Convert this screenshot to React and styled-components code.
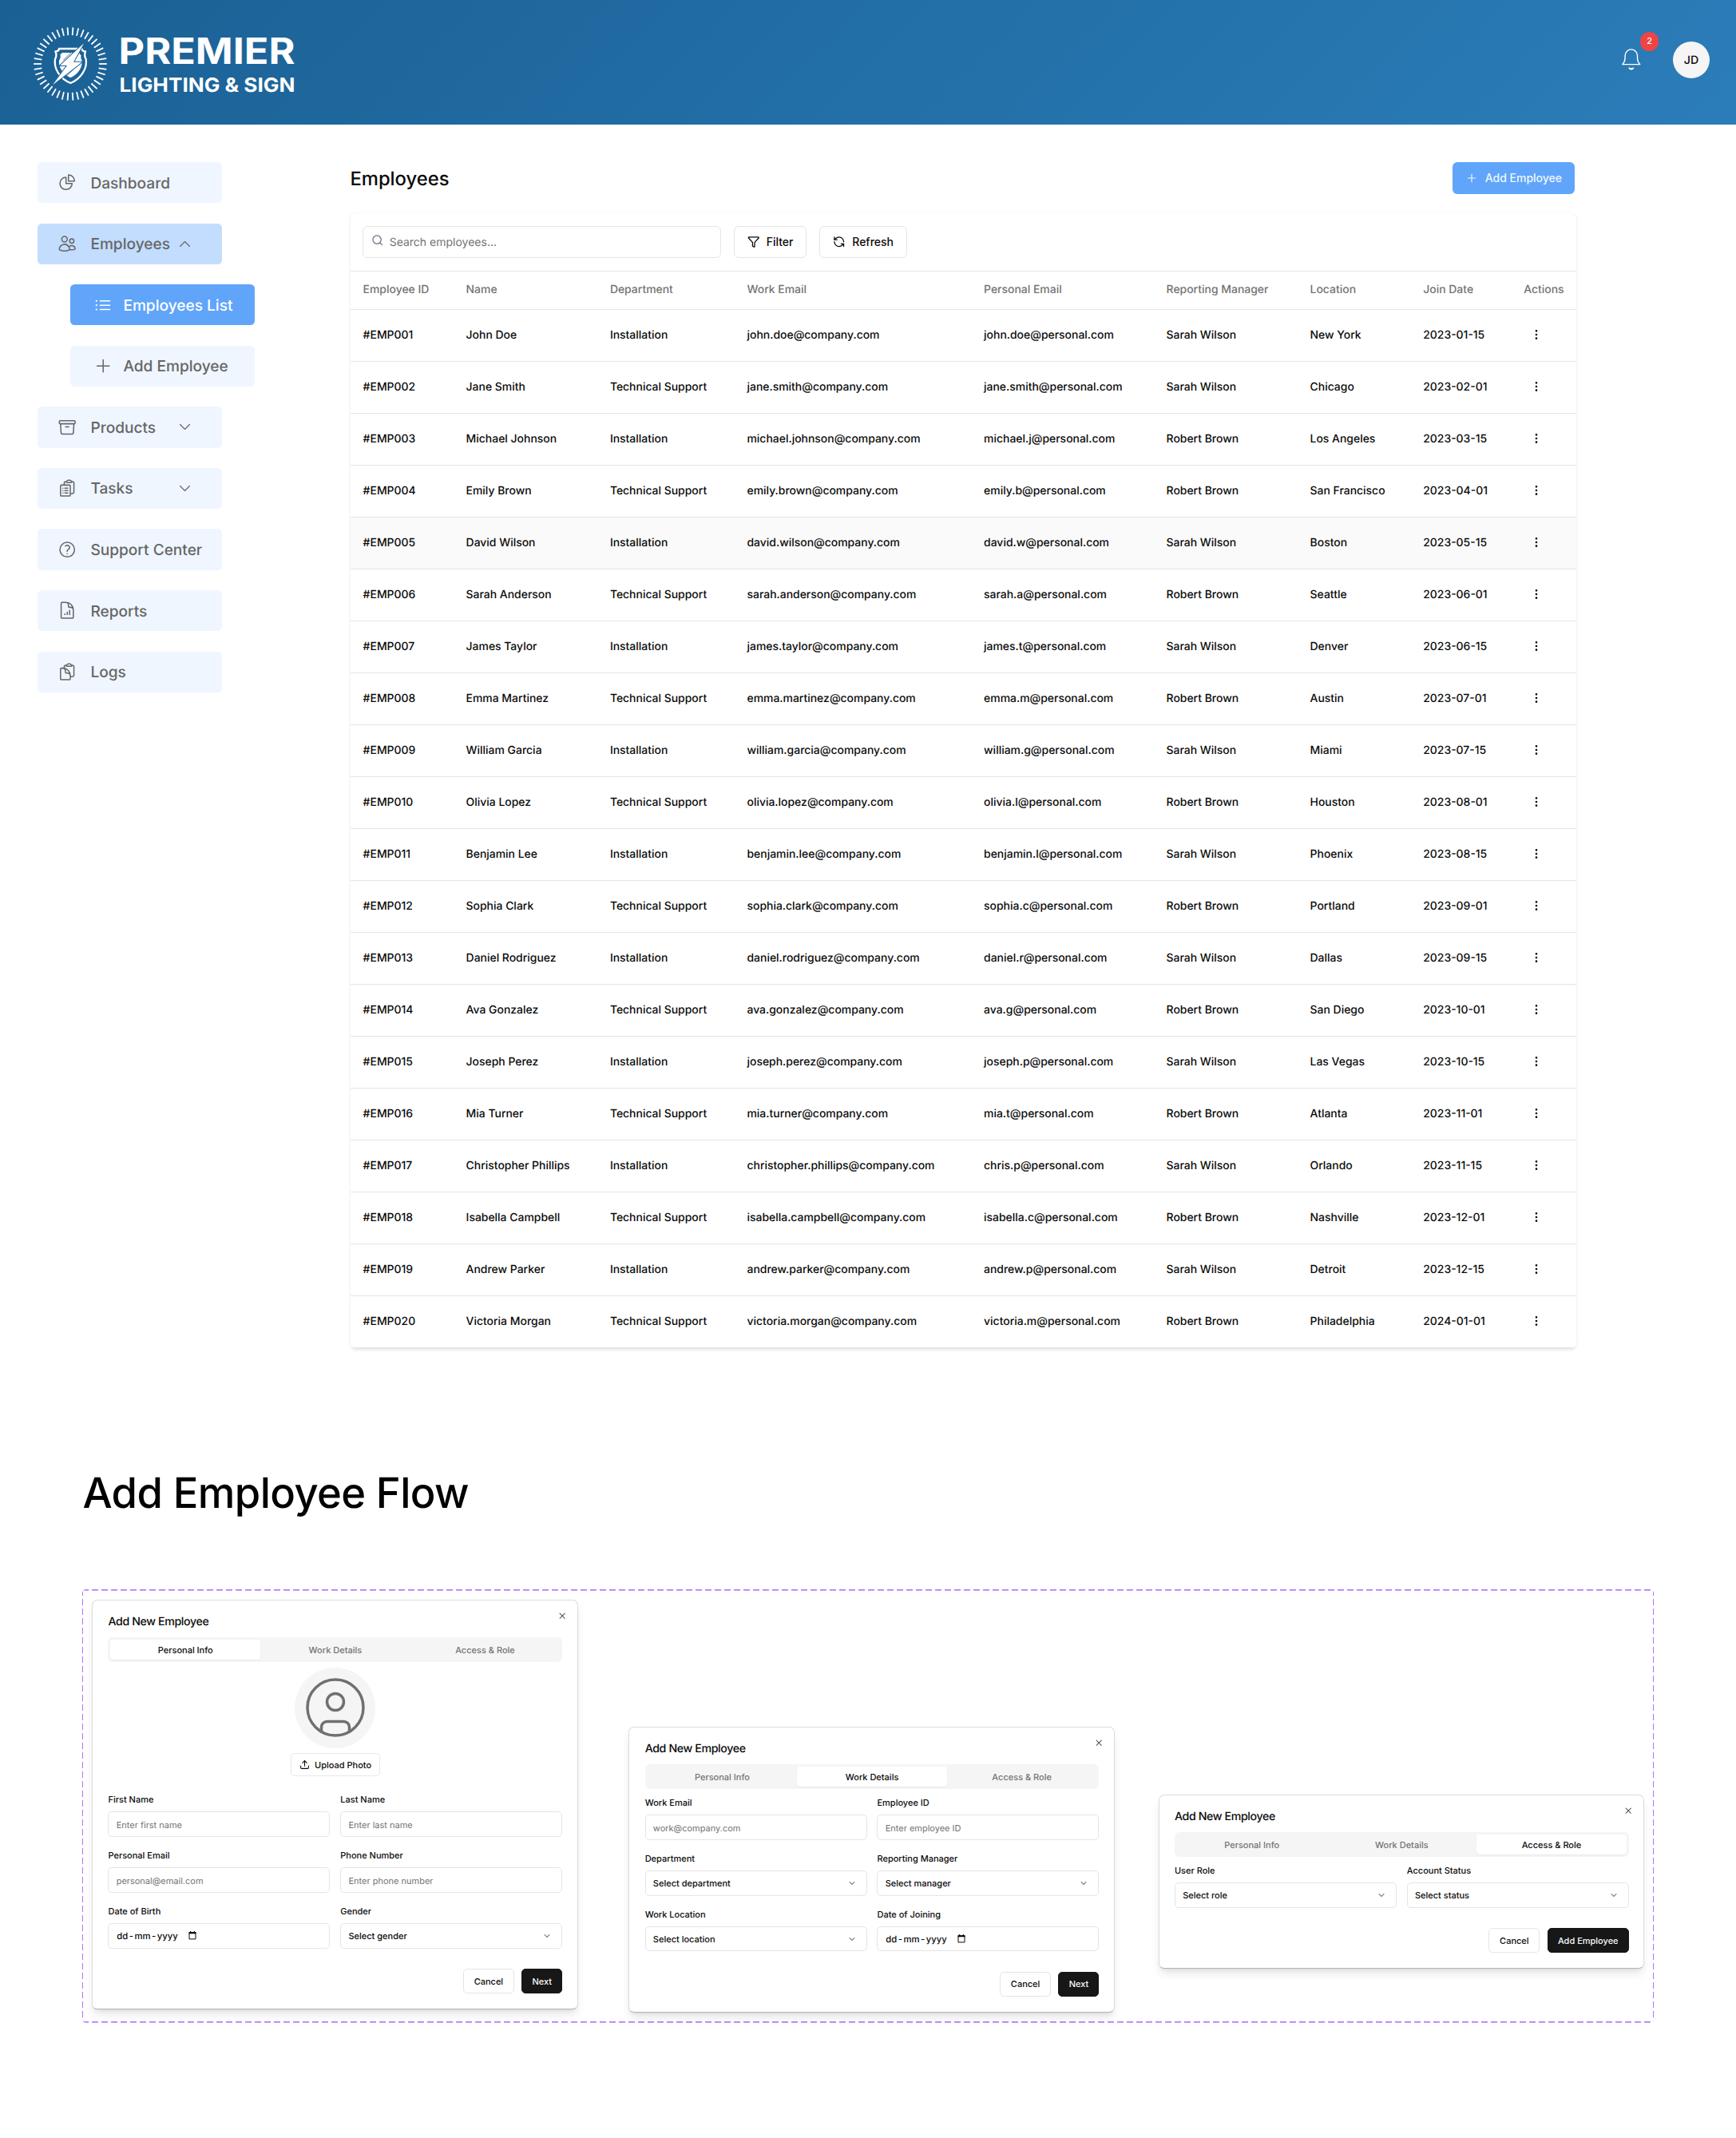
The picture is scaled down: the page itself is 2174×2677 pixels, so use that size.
import React from "react";
import styled, { createGlobalStyle, css } from "styled-components";
import {
  HiOutlineChartPie,
  HiOutlineUsers,
  HiOutlineListBullet,
  HiOutlinePlus,
  HiOutlineArchiveBox,
  HiOutlineClipboardDocumentList,
  HiOutlineQuestionMarkCircle,
  HiOutlineDocumentChartBar,
  HiOutlineClipboardDocument,
  HiOutlineChevronUp,
  HiOutlineChevronDown,
} from "react-icons/hi2";
import { Search, Filter, RefreshCcw, Plus, EllipsisVertical, X, CircleUser, Upload, ChevronDown } from "lucide-react";

const GlobalStyle = createGlobalStyle`
  *, *::before, *::after { box-sizing: border-box; }
  body {
    margin: 0;
    background: #fff;
    color: #0a0a0a;
    font-family: Inter, "Liberation Sans", sans-serif;
    font-weight: 500;
    text-rendering: geometricPrecision;
  }
  button { font: inherit; color: inherit; margin: 0; }
  svg { flex: none; display: block; }
`;

const Page = styled.div`
  width: 2174px;
  height: 2677px;
  overflow: hidden;
`;

/* ---------- header ---------- */

const Header = styled.header`
  height: 156px;
  padding: 0 33px 0 0;
  display: flex;
  align-items: center;
  justify-content: space-between;
  background: linear-gradient(135deg, #1a6094 0%, #2b7db9 100%);
`;

const HeaderTools = styled.div`
  display: flex;
  align-items: center;
  gap: 40.5px;
  margin-top: -6px;
`;

const BellButton = styled.div`
  position: relative;
  width: 24px;
  height: 28px;
`;

const Badge = styled.span`
  position: absolute;
  left: 23.6px;
  top: -20.6px;
  width: 23.2px;
  height: 23.2px;
  border-radius: 50%;
  background: #ef4444;
  color: #fafafa;
  font-size: 11px;
  line-height: 23px;
  text-align: center;
`;

const UserAvatar = styled.div`
  width: 46px;
  height: 46px;
  border-radius: 50%;
  background: #f5f5f5;
  color: #0a0a0a;
  display: grid;
  place-items: center;
  font-size: 14.2px;
`;

const TICKS = Array.from({ length: 42 }, (_, i) => (i * 360) / 42);

function Logo() {
  return (
    <svg width="390" height="156" viewBox="0 0 390 156" fill="#fff">
      <g stroke="#fff" strokeWidth="1.8">
        {TICKS.map((a) => (
          <line key={a} x1="124" y1="80" x2="133.8" y2="80" transform={`rotate(${a} 88 80)`} />
        ))}
      </g>
      <g transform="scale(0.33333)">
        <path
          d="M222 183 H307 C308 190 313 193 321 193 C316 206 318 214 323 222 C329 257 304 296 265 312 C225 296 201 257 207 222 C212 214 214 206 208 193 C216 193 221 190 222 183 Z"
          fill="none"
          stroke="#fff"
          strokeWidth="7"
          strokeLinejoin="round"
        />
        <path d="M233 198 H298 C299 203 302 206 305 208 C303 216 304 221 308 227 C311 252 294 278 265 292 C236 278 219 252 222 227 C227 220 229 212 226 204 C230 203 232 201 233 198 Z" />
        <path d="M238 226 L268 196 M250 226 L280 196 M250 286 L296 240 M240 282 L284 240" stroke="#1c6498" strokeWidth="2.5" />
        <path d="M315 163 L226 246 H252 L198 319 L308 233 H276 Z" stroke="#1c6498" strokeWidth="6" strokeLinejoin="miter" />
        <path d="M315 163 L226 246 H252 L198 319 L308 233 H276 Z" />
      </g>
      <text x="148.5" y="79.6" fontSize="45.5" fontWeight="700" textLength="221" lengthAdjust="spacingAndGlyphs">
        PREMIER
      </text>
      <text x="149.5" y="115" fontSize="24.4" fontWeight="700" textLength="220" lengthAdjust="spacingAndGlyphs">
        LIGHTING &amp; SIGN
      </text>
    </svg>
  );
}

function Bell() {
  return (
    <svg width="24" height="28" viewBox="0 0 24 28" fill="none" stroke="#fff" strokeWidth="1.4" strokeLinecap="round" strokeLinejoin="round">
      <path d="M.8 19.6H22.8C20.6 17.6 19.5 14.8 19.5 11V8.6A7.7 7.7 0 0 0 4.1 8.6V11C4.1 14.8 3 17.6 .8 19.6Z" />
      <path d="M9.1 24.1C10 26.4 13.7 26.4 14.6 24.1C13 25 10.7 25 9.1 24.1Z" fill="#fff" />
    </svg>
  );
}

/* ---------- body ---------- */

const Body = styled.div`
  display: flex;
  padding: 47px 0 0 47px;
`;

const Sidebar = styled.nav`
  width: 391.4px;
  flex: none;
  display: flex;
  flex-direction: column;
  gap: 25.4px;
`;

const NavItem = styled.a`
  width: 230.6px;
  height: 51.2px;
  margin-left: ${(p) => (p.$sub ? "41px" : "0")};
  padding-left: ${(p) => (p.$sub ? "28.6px" : "24.6px")};
  border-radius: 5.5px;
  display: flex;
  align-items: center;
  font-size: 19.1px;
  color: #666;
  background: #eff6ff;
  ${(p) => p.$tone === "open" && css`background: #c3ddfe;`}
  ${(p) => p.$tone === "active" && css`background: #60a5fa; color: #fff;`}
`;

const NavLabel = styled.span`
  margin-left: ${(p) => (p.$sub ? "13.4px" : "17.4px")};
  flex: 1;
  white-space: nowrap;
`;

const NavChevron = styled.span`
  width: 19px;
  margin-right: 36.6px;
`;

const NAV = [
  { label: "Dashboard", Icon: HiOutlineChartPie },
  { label: "Employees", Icon: HiOutlineUsers, tone: "open", Chevron: HiOutlineChevronUp },
  { label: "Employees List", Icon: HiOutlineListBullet, tone: "active", sub: true },
  { label: "Add Employee", Icon: HiOutlinePlus, sub: true },
  { label: "Products", Icon: HiOutlineArchiveBox, Chevron: HiOutlineChevronDown },
  { label: "Tasks", Icon: HiOutlineClipboardDocumentList, Chevron: HiOutlineChevronDown },
  { label: "Support Center", Icon: HiOutlineQuestionMarkCircle },
  { label: "Reports", Icon: HiOutlineDocumentChartBar },
  { label: "Logs", Icon: HiOutlineClipboardDocument },
];

const Main = styled.main`
  width: 1536.6px;
`;

const TitleBar = styled.div`
  height: 40px;
  width: 1533.4px;
  display: flex;
  align-items: center;
  justify-content: space-between;
`;

const PageTitle = styled.h1`
  margin: 0;
  font-size: 23.8px;
  font-weight: 500;
`;

const PrimaryButton = styled.button`
  height: 40px;
  width: 152.8px;
  padding: 0 0 1px;
  border: 0;
  border-radius: 6px;
  background: #60a5fa;
  color: #eff6ff;
  display: flex;
  align-items: center;
  justify-content: center;
  gap: 9px;
  font-size: 14px;
`;

const Card = styled.section`
  margin-top: 23px;
  height: 1423px;
  border: 1px solid #f7f7f7;
  border-top-color: #fcfcfc;
  border-bottom-color: #e5e5e5;
  border-radius: 8px;
  overflow: hidden;
  box-shadow: 0 1.5px 3px rgba(0, 0, 0, 0.07);
`;

const Toolbar = styled.div`
  height: 73px;
  padding: 0 15px 1px;
  display: flex;
  align-items: center;
  gap: 16px;
  border-bottom: 1px solid #e5e5e5;
`;

const SearchBox = styled.div`
  width: 448.4px;
  height: 40px;
  padding: 0 10px;
  border: 1px solid #e5e5e5;
  border-radius: 6px;
  display: flex;
  align-items: center;
  gap: 6.8px;
  color: #737373;
  font-size: 14px;
  font-weight: 400;
  svg { color: #6b7280; margin-top: -3px; }
  span { padding-top: 1px; }
`;

const OutlineButton = styled.button`
  height: 40px;
  width: ${(p) => p.$width}px;
  padding: 0;
  border: 1px solid #e5e5e5;
  border-radius: 6px;
  background: #fff;
  display: flex;
  align-items: center;
  justify-content: center;
  gap: 8.5px;
  font-size: 14px;
`;

const Row = styled.div`
  height: 65px;
  padding-bottom: 1.6px;
  display: grid;
  grid-template-columns: 129px 180.3px 171.6px 296.6px 228.5px 180px 141.7px 126px 1fr;
  align-items: center;
  border-bottom: 1px solid #e5e5e5;
  font-size: 13.95px;
  background: ${(p) => (p.$hover ? "#fafafa" : "transparent")};
`;

const HeadRow = styled(Row)`
  height: 48px;
  color: #737373;
`;

const Cell = styled.div`
  padding-left: 15.2px;
  white-space: nowrap;
`;

const ActionCell = styled(Cell)`
  padding-left: 22.6px;
`;

const HEADINGS = ["Employee ID", "Name", "Department", "Work Email", "Personal Email", "Reporting Manager", "Location", "Join Date", "Actions"];

const SW = "Sarah Wilson";
const RB = "Robert Brown";

const PEOPLE = [
  ["John Doe", "john.doe", "john.doe", SW, "New York", "2023-01-15"],
  ["Jane Smith", "jane.smith", "jane.smith", SW, "Chicago", "2023-02-01"],
  ["Michael Johnson", "michael.johnson", "michael.j", RB, "Los Angeles", "2023-03-15"],
  ["Emily Brown", "emily.brown", "emily.b", RB, "San Francisco", "2023-04-01"],
  ["David Wilson", "david.wilson", "david.w", SW, "Boston", "2023-05-15"],
  ["Sarah Anderson", "sarah.anderson", "sarah.a", RB, "Seattle", "2023-06-01"],
  ["James Taylor", "james.taylor", "james.t", SW, "Denver", "2023-06-15"],
  ["Emma Martinez", "emma.martinez", "emma.m", RB, "Austin", "2023-07-01"],
  ["William Garcia", "william.garcia", "william.g", SW, "Miami", "2023-07-15"],
  ["Olivia Lopez", "olivia.lopez", "olivia.l", RB, "Houston", "2023-08-01"],
  ["Benjamin Lee", "benjamin.lee", "benjamin.l", SW, "Phoenix", "2023-08-15"],
  ["Sophia Clark", "sophia.clark", "sophia.c", RB, "Portland", "2023-09-01"],
  ["Daniel Rodriguez", "daniel.rodriguez", "daniel.r", SW, "Dallas", "2023-09-15"],
  ["Ava Gonzalez", "ava.gonzalez", "ava.g", RB, "San Diego", "2023-10-01"],
  ["Joseph Perez", "joseph.perez", "joseph.p", SW, "Las Vegas", "2023-10-15"],
  ["Mia Turner", "mia.turner", "mia.t", RB, "Atlanta", "2023-11-01"],
  ["Christopher Phillips", "christopher.phillips", "chris.p", SW, "Orlando", "2023-11-15"],
  ["Isabella Campbell", "isabella.campbell", "isabella.c", RB, "Nashville", "2023-12-01"],
  ["Andrew Parker", "andrew.parker", "andrew.p", SW, "Detroit", "2023-12-15"],
  ["Victoria Morgan", "victoria.morgan", "victoria.m", RB, "Philadelphia", "2024-01-01"],
];

function EmployeeTable() {
  return (
    <>
      <HeadRow>
        {HEADINGS.map((h) => (
          <Cell key={h}>{h}</Cell>
        ))}
      </HeadRow>
      {PEOPLE.map(([name, work, personal, manager, city, date], i) => (
        <Row key={name} $hover={i === 4}>
          <Cell>#EMP{String(i + 1).padStart(3, "0")}</Cell>
          <Cell>{name}</Cell>
          <Cell>{i % 2 ? "Technical Support" : "Installation"}</Cell>
          <Cell>{work}@company.com</Cell>
          <Cell>{personal}@personal.com</Cell>
          <Cell>{manager}</Cell>
          <Cell>{city}</Cell>
          <Cell>{date}</Cell>
          <ActionCell>
            <EllipsisVertical size={16} />
          </ActionCell>
        </Row>
      ))}
    </>
  );
}

/* ---------- add employee flow ---------- */

const Flow = styled.section`
  padding: 148px 0 0 103.4px;
`;

const FlowTitle = styled.h2`
  margin: 0;
  font-size: 52.5px;
  line-height: 64px;
  font-weight: 500;
  letter-spacing: -0.6px;
  color: #000;
`;

const dashX = "repeating-linear-gradient(90deg, #ad72ff 0 8px, transparent 8px 12px)";
const dashY = "repeating-linear-gradient(180deg, #ad72ff 0 8px, transparent 8px 12px)";

const FlowFrame = styled.div`
  margin-top: 89px;
  width: 1968px;
  height: 542.6px;
  padding: 12.9px 0 0 11.9px;
  display: flex;
  align-items: flex-start;
  border-radius: 5px;
  background-image: ${dashX}, ${dashX}, ${dashY}, ${dashY};
  background-size: 100% 1.6px, 100% 1.6px, 1.4px 100%, 1.4px 100%;
  background-position: 0 0, 0 100%, 0 0, 100% 0;
  background-repeat: no-repeat;
`;

const Dialog = styled.div`
  width: 608.4px;
  height: ${(p) => p.$height}px;
  margin: ${(p) => p.$top || 0}px 0 0 ${(p) => p.$left || 0}px;
  padding: 19.2px 18.4px 0 19.2px;
  border: 1px solid #dcdcdc;
  border-bottom-color: #b4b4b4;
  border-radius: 7px;
  background: #fff;
  box-shadow: 0 8px 12px -2px rgba(0, 0, 0, 0.1), 0 3px 5px -3px rgba(0, 0, 0, 0.1);
`;

const DialogHead = styled.div`
  height: 27px;
  display: flex;
  justify-content: space-between;
  align-items: flex-start;
  svg { color: #555; margin: -6.4px -6px 0 0; }
`;

const DialogTitle = styled.h3`
  margin: 0;
  font-size: 14.2px;
  line-height: 15px;
  font-weight: 550;
  letter-spacing: -0.38px;
`;

const Tabs = styled.div`
  height: 31.4px;
  padding: 3px;
  display: grid;
  grid-template-columns: repeat(3, 1fr);
  border-radius: 6px;
  background: #f5f5f5;
`;

const Tab = styled.div`
  display: grid;
  place-items: center;
  border-radius: 4px;
  font-size: 11px;
  color: ${(p) => (p.$active ? "#0a0a0a" : "#737373")};
  ${(p) => p.$active && css`background: #fff; box-shadow: 0 1px 2px rgba(0, 0, 0, 0.06);`}
`;

const PhotoArea = styled.div`
  padding-top: 6.3px;
  height: 155.8px;
  display: flex;
  flex-direction: column;
  align-items: center;
  gap: 6.4px;
`;

const PhotoCircle = styled.div`
  width: 101.2px;
  height: 101.2px;
  border-radius: 50%;
  background: #f5f5f5;
  color: #707070;
  display: grid;
  place-items: center;
`;

const UploadButton = styled.button`
  width: 111.4px;
  height: 28.4px;
  padding: 0;
  border: 1px solid #e8e8e8;
  border-radius: 5px;
  background: #fff;
  display: flex;
  align-items: center;
  justify-content: center;
  gap: 6.5px;
  font-size: 11px;
`;

const FormGrid = styled.div`
  margin-top: ${(p) => p.$top}px;
  display: grid;
  grid-template-columns: 1fr 1fr;
  gap: 17.3px 12.8px;
`;

const FieldLabel = styled.div`
  height: 12px;
  margin-bottom: 9.2px;
  font-size: 11px;
  line-height: 12px;
`;

const Control = styled.div`
  height: 31.4px;
  padding: 0 12px 0 9.2px;
  border: 1px solid #e5e5e5;
  border-radius: 5px;
  display: flex;
  align-items: center;
  font-size: 11px;
  font-weight: ${(p) => (p.$placeholder ? 400 : 500)};
  color: ${(p) => (p.$placeholder ? "#737373" : "#0a0a0a")};
  padding-top: ${(p) => (p.$placeholder ? "2px" : "0")};
`;

const Grow = styled.span`
  flex: 1;
`;

const DateParts = styled.span`
  display: flex;
  gap: 1.5px;
  width: 90px;
  padding-left: 0.6px;
  font-size: 11.3px;
  font-weight: 450;
`;

const DialogActions = styled.div`
  margin-top: 25.4px;
  display: flex;
  justify-content: flex-end;
  gap: 9.4px;
`;

const DialogButton = styled.button`
  width: ${(p) => p.$width}px;
  height: 31.4px;
  padding: 0;
  border-radius: 5px;
  font-size: 11px;
  border: 1px solid ${(p) => (p.$dark ? "#171717" : "#e5e5e5")};
  background: ${(p) => (p.$dark ? "#171717" : "#fff")};
  color: ${(p) => (p.$dark ? "#fafafa" : "#0a0a0a")};
`;

function CalendarIcon() {
  return (
    <svg width="10" height="11" viewBox="0 0 10 11">
      <path d="M1 1.7h8v8.2H1z" fill="none" stroke="#0a0a0a" strokeWidth="1" />
      <path d="M.5 1.2h9v2.1h-9zM2 0h1.2v2H2zM6.8 0H8v2H6.8z" fill="#0a0a0a" />
    </svg>
  );
}

function Field({ label, kind, text }) {
  return (
    <div>
      <FieldLabel>{label}</FieldLabel>
      {kind === "date" && (
        <Control>
          <DateParts>
            <span>dd</span>
            <span>-</span>
            <span>mm</span>
            <span>-</span>
            <span>yyyy</span>
          </DateParts>
          <CalendarIcon />
        </Control>
      )}
      {kind === "select" && (
        <Control>
          <Grow>{text}</Grow>
          <ChevronDown size={12} color="#888" strokeWidth={2.2} />
        </Control>
      )}
      {!kind && <Control $placeholder>{text}</Control>}
    </div>
  );
}

const STEPS = ["Personal Info", "Work Details", "Access & Role"];

function StepDialog({ step, height, top, left, formTop, fields, submit, submitWidth, children }) {
  return (
    <Dialog $height={height} $top={top} $left={left}>
      <DialogHead>
        <DialogTitle>Add New Employee</DialogTitle>
        <X size={12.4} strokeWidth={2} />
      </DialogHead>
      <Tabs>
        {STEPS.map((s, i) => (
          <Tab key={s} $active={i === step}>
            {s}
          </Tab>
        ))}
      </Tabs>
      {children}
      <FormGrid $top={formTop}>
        {fields.map((f) => (
          <Field key={f.label} {...f} />
        ))}
      </FormGrid>
      <DialogActions>
        <DialogButton $width={64}>Cancel</DialogButton>
        <DialogButton $dark $width={submitWidth}>
          {submit}
        </DialogButton>
      </DialogActions>
    </Dialog>
  );
}

const PERSONAL_FIELDS = [
  { label: "First Name", text: "Enter first name" },
  { label: "Last Name", text: "Enter last name" },
  { label: "Personal Email", text: "personal@email.com" },
  { label: "Phone Number", text: "Enter phone number" },
  { label: "Date of Birth", kind: "date" },
  { label: "Gender", kind: "select", text: "Select gender" },
];

const WORK_FIELDS = [
  { label: "Work Email", text: "work@company.com" },
  { label: "Employee ID", text: "Enter employee ID" },
  { label: "Department", kind: "select", text: "Select department" },
  { label: "Reporting Manager", kind: "select", text: "Select manager" },
  { label: "Work Location", kind: "select", text: "Select location" },
  { label: "Date of Joining", kind: "date" },
];

const ACCESS_FIELDS = [
  { label: "User Role", kind: "select", text: "Select role" },
  { label: "Account Status", kind: "select", text: "Select status" },
];

export default function App() {
  return (
    <>
      <GlobalStyle />
      <Page>
        <Header>
          <Logo />
          <HeaderTools>
            <BellButton>
              <Bell />
              <Badge>2</Badge>
            </BellButton>
            <UserAvatar>JD</UserAvatar>
          </HeaderTools>
        </Header>
        <Body>
          <Sidebar>
            {NAV.map(({ label, Icon, tone, sub, Chevron }) => (
              <NavItem key={label} $tone={tone} $sub={sub}>
                <Icon size={24.4} />
                <NavLabel $sub={sub}>{label}</NavLabel>
                {Chevron && (
                  <NavChevron>
                    <Chevron size={19} />
                  </NavChevron>
                )}
              </NavItem>
            ))}
          </Sidebar>
          <Main>
            <TitleBar>
              <PageTitle>Employees</PageTitle>
              <PrimaryButton>
                <Plus size={16} strokeWidth={1.8} />
                Add Employee
              </PrimaryButton>
            </TitleBar>
            <Card>
              <Toolbar>
                <SearchBox>
                  <Search size={15.5} strokeWidth={1.9} />
                  <span>Search employees...</span>
                </SearchBox>
                <OutlineButton $width={91.6}>
                  <Filter size={15.5} />
                  Filter
                </OutlineButton>
                <OutlineButton $width={109.5}>
                  <RefreshCcw size={15.5} />
                  Refresh
                </OutlineButton>
              </Toolbar>
              <EmployeeTable />
            </Card>
          </Main>
        </Body>
        <Flow>
          <FlowTitle>Add Employee Flow</FlowTitle>
          <FlowFrame>
            <StepDialog step={0} height={513.2} formTop={10} fields={PERSONAL_FIELDS} submit="Next" submitWidth={51}>
              <PhotoArea>
                <PhotoCircle>
                  <CircleUser size={84} strokeWidth={1} />
                </PhotoCircle>
                <UploadButton>
                  <Upload size={13} />
                  Upload Photo
                </UploadButton>
              </PhotoArea>
            </StepDialog>
            <StepDialog step={1} height={358} top={159} left={63.8} formTop={10.6} fields={WORK_FIELDS} submit="Next" submitWidth={51} />
            <StepDialog step={2} height={218.4} top={244} left={54.9} formTop={10.6} fields={ACCESS_FIELDS} submit="Add Employee" submitWidth={102} />
          </FlowFrame>
        </Flow>
      </Page>
    </>
  );
}
